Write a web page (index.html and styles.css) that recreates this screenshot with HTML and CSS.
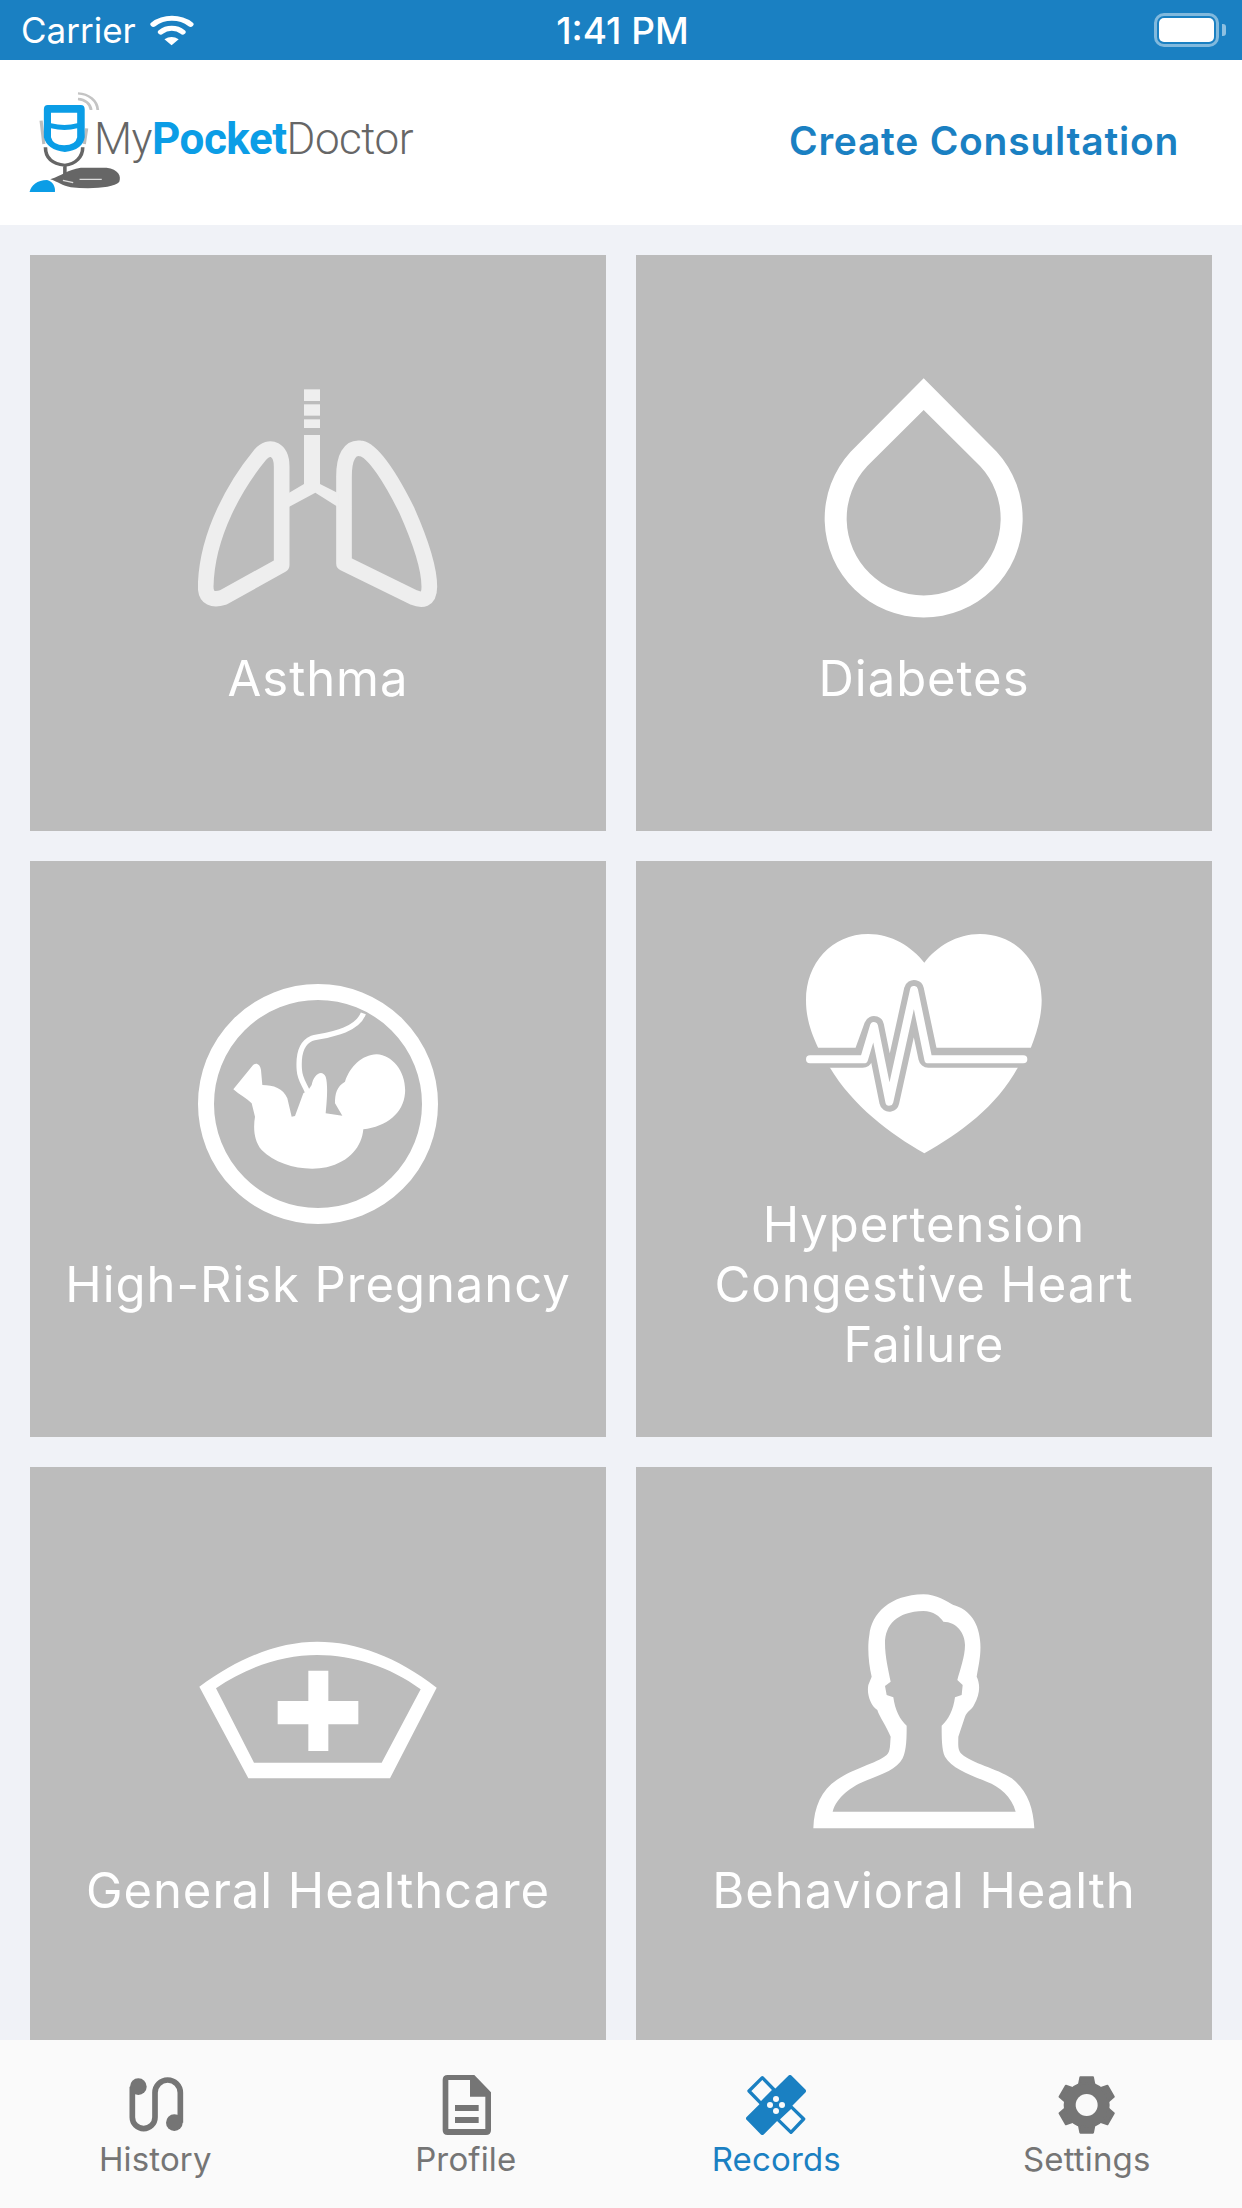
FILE: index.html
```html
<!DOCTYPE html>
<html lang="en">
<head>
<meta charset="utf-8">
<title>MyPocketDoctor</title>
<link rel="stylesheet" href="styles.css">
</head>
<body>
<div class="app">
  <header class="status">
    <div class="status-left">
      <span>Carrier</span>
      <svg class="wifi" viewBox="375 36 120 102" preserveAspectRatio="none"><path d="M386 73A70 70 0 0 1 480 73" class="wifi-arc"/><path d="M405 96A40 40 0 0 1 460 96" class="wifi-arc"/><path d="M414 118Q432 104 450 118L432 136Z" class="wifi-dot"/></svg>
    </div>
    <div class="status-time">1:41 PM</div>
    <div class="status-right">
      <div class="battery"><div class="battery-fill"></div></div>
      <div class="battery-nub"></div>
    </div>
  </header>

  <nav class="navbar">
    <div class="logo">
      <svg class="logo-icon" viewBox="72 270 174 315" preserveAspectRatio="none">
        <path class="l-wave" d="M198 280A52 52 0 0 1 248 330M198 297A35 35 0 0 1 231 330"/>
        <path class="l-ear" d="M105 362L112 432M220 385L214 432"/>
        <path class="l-tube" d="M116 442C116 475 135 492 165 496C192 492 210 472 210 442M165 494V522"/>
        <path class="l-blue" fill-rule="evenodd" d="M122 315H205Q215 315 215 328V412Q210 450 165 456Q120 450 112 412V328Q112 315 122 315ZM130 338V370Q165 380 196 370V338ZM130 385V412Q135 436 163 436Q192 436 196 412V385Q165 395 130 385Z"/>
        <path class="l-base" d="M128 538C160 525 170 510 205 503L270 503C300 508 308 528 302 546C288 564 230 568 180 562C160 558 145 544 128 538Z"/>
        <path class="l-line" d="M202 538H258M160 541L186 548"/>
        <path class="l-blue" d="M76 576C80 556 95 540 120 540C135 544 141 560 140 576Z"/>
      </svg>
      <div class="logo-text">My<b>Pocket</b>Doctor</div>
    </div>
    <a class="create">Create Consultation</a>
  </nav>

  <main class="content">
    <div class="grid">
      <section class="card">
        <svg class="icon lungs" viewBox="114 54 720 720">
          <path class="lung" d="M365 615V320C365 270 330 250 300 285C230 370 140 520 137 680C137 715 160 722 190 712Z"/>
          <path class="lung" d="M552 610V350C552 290 570 262 600 265C640 265 700 370 740 450C780 540 808 620 808 680C808 722 785 722 760 712Z"/>
          <path d="M432 225H480V372L535 400V442L466 398L385 442V400L432 372Z"/>
          <rect x="432" y="88" width="48" height="35"/>
          <rect x="432" y="133" width="48" height="34"/>
          <rect x="432" y="178" width="48" height="26"/>
        </svg>
        <div class="label">Asthma</div>
      </section>

      <section class="card">
        <svg class="icon white" viewBox="72 54 720 720">
          <path fill-rule="evenodd" d="M431 55L650 275A297 297 0 1 1 212 275ZM431 150L262 318A231 231 0 1 0 600 318Z"/>
        </svg>
        <div class="label">Diabetes</div>
      </section>

      <section class="card">
        <svg class="icon white" viewBox="54 42 720 720">
          <circle class="ring" cx="414" cy="402" r="336"/>
          <path class="cord" d="M550 130C530 185 440 195 395 205C360 220 355 260 358 300C360 330 375 345 382 365"/>
          <path d="M160 358L215 290C225 275 240 280 243 300L247 345C280 345 310 355 322 385L335 440L345 438L370 370L385 360L395 345C400 315 425 295 437 320C445 345 440 400 437 430L487 437L465 400C465 370 470 350 495 335C510 290 545 255 590 253C640 255 680 310 675 370C670 430 620 470 550 478C545 530 510 575 440 592C370 605 290 585 245 540C220 510 220 470 225 440L215 400C200 385 180 375 160 358Z"/>
        </svg>
        <div class="label">High-Risk Pregnancy</div>
      </section>

      <section class="card">
        <svg class="icon white" viewBox="42 12 720 720">
          <path d="M403 128C440 80 500 42 570 42C680 42 755 130 755 240C755 290 740 340 722 385L685 440C620 560 510 640 403 700C300 640 190 560 118 440L85 385C60 330 48 290 48 240C48 130 125 42 235 42C305 42 365 80 403 128Z"/>
          <path class="ecg-out" d="M0 413H218L252 318L298 545L372 210L415 413H800"/>
          <path class="ecg-in" d="M60 418H222L252 318L298 545L372 210L415 418H700"/>
        </svg>
        <div class="label">Hypertension<br>Congestive Heart<br>Failure</div>
      </section>

      <section class="card">
        <svg class="icon white" viewBox="54 -90 720 720">
          <path fill-rule="evenodd" d="M58 200C180 110 300 65 412 65C530 65 650 110 770 203L630 475H205ZM108 205L222 428H605L722 208C630 140 520 105 412 105C310 105 200 140 108 205Z"/>
          <path d="M385 152H445V243H535V313H445V393H385V313H293V243H385Z"/>
        </svg>
        <div class="label">General Healthcare</div>
      </section>

      <section class="card">
        <svg class="icon white" viewBox="42 30 720 720">
          <path fill-rule="evenodd" d="M70 745C72 680 95 630 140 600C190 565 260 550 290 525C302 515 300 490 302 470C290 440 268 410 262 390C240 375 230 340 235 315L245 290C235 250 232 200 238 165C245 100 300 45 400 43C440 43 470 65 490 75C530 85 565 120 570 180C575 220 565 260 560 290C570 310 572 340 552 375C545 390 530 395 525 410L505 470C505 490 502 510 515 522C545 550 620 565 665 595C710 630 730 680 733 745ZM128 695H677C665 650 630 620 590 605C540 585 485 565 465 530C455 510 455 470 455 437C475 420 490 390 495 352L515 345L518 315L502 300C510 270 525 230 525 195C525 160 500 125 460 125C450 110 430 93 400 93C320 95 285 135 285 190C285 230 295 270 302 305L285 318L290 345L310 352C315 390 330 420 350 437C350 470 350 510 338 535C320 570 270 585 220 605C185 620 140 650 128 695Z"/>
        </svg>
        <div class="label">Behavioral Health</div>
      </section>
    </div>
  </main>

  <footer class="tabbar">
    <div class="tab">
      <svg class="tab-icon" viewBox="192 135 180 180">
        <path class="hist" d="M214 170V262A34 34 0 0 0 282 262V188A38 38 0 0 1 358 188V278"/>
        <circle class="grey" cx="232" cy="170" r="25"/>
        <circle class="grey" cx="340" cy="278" r="25"/>
      </svg>
      <span>History</span>
    </div>
    <div class="tab">
      <svg class="tab-icon" viewBox="1125 135 180 180">
        <path class="grey" fill-rule="evenodd" d="M1160 135H1240L1290 187V300Q1290 315 1275 315H1160Q1145 315 1145 300V150Q1145 135 1160 135ZM1162 150V297H1273V200H1227V150Z"/>
        <rect class="grey" x="1182" y="225" width="71" height="18"/>
        <rect class="grey" x="1182" y="261" width="71" height="18"/>
      </svg>
      <span>Profile</span>
    </div>
    <div class="tab active">
      <svg class="tab-icon" viewBox="198 135 180 180">
        <path class="band" d="M330 141L372 183L247 309L204 265Z"/>
        <path class="band-open" d="M247 143L207 183L243 220L283 180Z"/>
        <path class="band-open" d="M333 307L371 267L333 230L293 268Z"/>
        <circle class="dot" cx="288" cy="207" r="9"/>
        <circle class="dot" cx="270" cy="225" r="9"/>
        <circle class="dot" cx="306" cy="225" r="9"/>
        <circle class="dot" cx="288" cy="243" r="9"/>
      </svg>
      <span>Records</span>
    </div>
    <div class="tab">
      <svg class="tab-icon" viewBox="1131 135 180 180">
        <defs><path id="tooth" d="M1201 142H1239L1246 178H1194Z"/></defs>
        <g class="gear">
          <use href="#tooth"/>
          <use href="#tooth" transform="rotate(60 1220 225)"/>
          <use href="#tooth" transform="rotate(120 1220 225)"/>
          <use href="#tooth" transform="rotate(180 1220 225)"/>
          <use href="#tooth" transform="rotate(240 1220 225)"/>
          <use href="#tooth" transform="rotate(300 1220 225)"/>
          <circle cx="1220" cy="225" r="66"/>
        </g>
        <circle class="hole" cx="1220" cy="225" r="33"/>
      </svg>
      <span>Settings</span>
    </div>
  </footer>
</div>
</body>
</html>
```

FILE: styles.css
```css
* { box-sizing: border-box; }
html, body { margin: 0; padding: 0; }
body { font-family: Inter, "Noto Sans", sans-serif; background: #f0f2f7; }

.app { width: 1242px; height: 2208px; display: flex; flex-direction: column; overflow: hidden; }

/* status bar */
.status { height: 60px; flex: none; background: #1a80c2; color: #fff; display: grid; grid-template-columns: 1fr auto 1fr; align-items: center; font-size: 35px; padding: 0 16px 0 21px; }
.status-left { display: flex; align-items: center; gap: 13px; }
.wifi { width: 47.5px; height: 34px; margin-top: -2px; }
.wifi-arc { fill: none; stroke: #fff; stroke-width: 15; stroke-linecap: round; }
.wifi-dot { fill: #fff; }
.status-time { font-weight: 500; font-size: 37px; margin-left: -2px; }
.status-right { display: flex; justify-content: flex-end; align-items: center; gap: 3px; }
.battery { width: 65px; height: 34px; border: 3px solid rgba(255,255,255,.45); border-radius: 10px; padding: 2px; }
.battery-fill { width: 100%; height: 100%; background: #fff; border-radius: 5px; }
.battery-nub { width: 4px; height: 12px; background: rgba(255,255,255,.5); border-radius: 0 3px 3px 0; }

/* nav */
.navbar { height: 165px; flex: none; background: #fff; display: flex; align-items: center; justify-content: space-between; padding: 0 63px 0 28px; }
.logo { display: flex; align-items: center; }
.logo-icon { width: 69px; height: 105px; overflow: visible; flex: none; }
.l-wave { fill: none; stroke: #c4c4c4; stroke-width: 7; }
.l-ear { fill: none; stroke: #bdbdbd; stroke-width: 8; }
.l-tube { fill: none; stroke: #666; stroke-width: 9; }
.l-blue { fill: #0b9de6; }
.l-base { fill: #666; }
.l-line { fill: none; stroke: #ddd; stroke-width: 4; }
.logo-text { font-family: Roboto, sans-serif; font-weight: 300; font-size: 44px; color: #666; letter-spacing: -0.5px; margin: -8px 0 0 -3px; }
.logo-text b { font-weight: 700; color: #0b9de6; }
.create { font-size: 39px; font-weight: 600; color: #1a80c2; letter-spacing: 0.75px; margin-top: -5px; }

/* cards */
.content { flex: 1; min-height: 0; overflow: hidden; padding: 30px; }
.grid { display: grid; grid-template-columns: 576px 576px; grid-auto-rows: 576px; gap: 30px; }
.card { background: #bcbcbc; display: flex; flex-direction: column; align-items: center; justify-content: center; gap: 30px; }
.icon { width: 240px; height: 240px; flex: none; }
.white { fill: #fff; }
.lungs { fill: #eee; }
.lung { fill: none; stroke: #eee; stroke-width: 47; stroke-linejoin: round; }
.ring { fill: none; stroke: #fff; stroke-width: 48; }
.cord { fill: none; stroke: #fff; stroke-width: 16; }
.ecg-out { fill: none; stroke: #bcbcbc; stroke-width: 60; stroke-linejoin: round; }
.ecg-in { fill: none; stroke: #fff; stroke-width: 24; stroke-linejoin: round; stroke-linecap: round; }
.label { color: #fff; font-size: 49px; line-height: 60px; text-align: center; letter-spacing: 0.95px; padding-top: 1px; margin-bottom: -1px; }

/* tabs */
.tabbar { height: 168px; flex: none; background: #fafafa; display: grid; grid-template-columns: repeat(4, 1fr); position: relative; }
.tab { display: flex; flex-direction: column; align-items: center; padding-top: 35px; color: #757575; font-size: 33px; line-height: 44px; gap: 2px; letter-spacing: 0.15px; }
.tab.active { color: #1a80c2; }
.tab-icon { width: 60px; height: 60px; flex: none; }
.grey { fill: #757575; }
.hist { fill: none; stroke: #757575; stroke-width: 17; }
.gear { fill: #757575; stroke: #757575; stroke-width: 6; stroke-linejoin: round; }
.hole { fill: #fafafa; }
.band { fill: #1a80c2; stroke: #1a80c2; stroke-width: 12; stroke-linejoin: round; }
.band-open { fill: #fafafa; stroke: #1a80c2; stroke-width: 10; stroke-linejoin: round; }
.dot { fill: #fafafa; }
```
